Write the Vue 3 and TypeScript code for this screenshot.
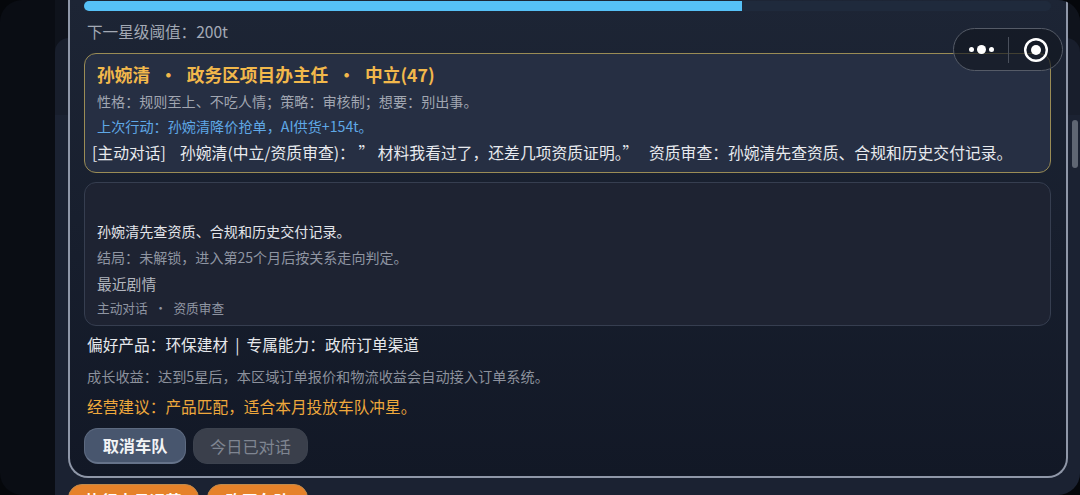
<template>
  <div class="page">
    <main class="shell">
      <div class="backdrop"></div>
      <section class="card">
        <div class="track"><div class="fill" :style="{ width: progress + '%' }"></div></div>
        <p class="threshold">下一星级阈值：200t</p>

        <div class="contact">
          <h3>孙婉清<span class="sep">·</span>政务区项目办主任<span class="sep">·</span>中立(47)</h3>
          <p class="traits">性格：规则至上、不吃人情；策略：审核制；想要：别出事。</p>
          <p class="last">上次行动：孙婉清降价抢单，AI供货+154t。</p>
          <p class="dialog">[主动对话]&nbsp;&nbsp;&nbsp;&nbsp;孙婉清(中立/资质审查)：&nbsp;”&nbsp;材料我看过了，还差几项资质证明。” &nbsp;&nbsp;资质审查：孙婉清先查资质、合规和历史交付记录。</p>
        </div>

        <div class="story">
          <p class="summary">孙婉清先查资质、合规和历史交付记录。</p>
          <p class="ending">结局：未解锁，进入第25个月后按关系走向判定。</p>
          <p class="recent">最近剧情</p>
          <p class="tags">主动对话<span class="sep">·</span>资质审查</p>
        </div>

        <p class="prefs">偏好产品：环保建材 &nbsp;|&nbsp; 专属能力：政府订单渠道</p>
        <p class="growth">成长收益：达到5星后，本区域订单报价和物流收益会自动接入订单系统。</p>
        <p class="advice">经营建议：产品匹配，适合本月投放车队冲星。</p>

        <div class="actions">
          <button class="btn cancel" type="button">取消车队</button>
          <button class="btn done" type="button" disabled>今日已对话</button>
        </div>
      </section>

      <div class="bottom-actions">
        <button class="orange first" type="button">执行本月运营</button>
        <button class="orange" type="button">购买车队</button>
      </div>
    </main>

    <div class="capsule">
      <span class="dots"><i></i><i class="big"></i><i></i></span>
      <span class="divider"></span>
      <svg class="target" width="26" height="26" viewBox="0 0 26 26">
        <circle cx="13" cy="13" r="10.8" fill="none" stroke="#fff" stroke-width="2.4" />
        <circle cx="13" cy="13" r="5" fill="#fff" />
      </svg>
    </div>
    <div class="scrollbar"></div>
  </div>
</template>

<script setup lang="ts">
const progress = 68
</script>

<style>
html,
body {
  margin: 0;
  background: #05070b;
}
</style>

<style scoped>
.page {
  position: relative;
  width: 1080px;
  height: 495px;
  overflow: hidden;
  border-radius: 22px;
  background: #0a0d14;
  font-family: "Noto Sans CJK SC", "Liberation Sans", sans-serif;
}

.shell {
  position: relative;
  height: 495px;
  margin-left: 55px;
  padding-left: 13px;
  box-sizing: border-box;
  background: linear-gradient(#0f131c 0 115px, #1b2232 115px);
}

.backdrop {
  position: absolute;
  left: 0;
  right: 0;
  top: 38px;
  height: 77px;
  border-radius: 14px 14px 0 0;
  background: #181e2c;
}

.card {
  position: relative;
  width: 1000px;
  height: 478px;
  box-sizing: border-box;
  padding: 1px 15px 0 14px;
  border: 2px solid #8f97a8;
  border-top: 0;
  border-radius: 0 0 20px 20px;
  background: linear-gradient(#1d2535, #121826);
}

p,
h3 {
  margin: 0;
}

.track {
  height: 10px;
  border-radius: 0 5px 5px 0;
  background: #1f2a3c;
}

.fill {
  height: 100%;
  border-radius: 5px 0 0 5px;
  background: #56c1f7;
}

.threshold {
  margin: 10px 0 0 3px;
  font-size: 15.6px;
  line-height: 20px;
  color: #a3a9b4;
}

.contact {
  margin-top: 12px;
  height: 120px;
  box-sizing: border-box;
  padding: 8px 12px 0;
  border: 1px solid #9a8c55;
  border-radius: 12px;
  background: #262f43;
}

.contact h3 {
  font-size: 17.7px;
  line-height: 24px;
  font-weight: 700;
  color: #f2b84b;
}

.contact h3 .sep {
  margin: 0 9.5px;
}

.traits {
  margin-top: 5px;
  font-size: 14.1px;
  line-height: 20px;
  color: #a1a6b1;
}

.last {
  margin-top: 5px;
  font-size: 14.15px;
  line-height: 20px;
  color: #5fa8e6;
}

.dialog {
  margin: 6px 0 0 -5px;
  font-size: 15.8px;
  line-height: 22px;
  color: #e8eaee;
  white-space: nowrap;
}

.story {
  margin-top: 9px;
  height: 144px;
  box-sizing: border-box;
  padding: 38px 12px 0;
  border: 1px solid #363e50;
  border-radius: 12px;
  background: #1e2332;
}

.summary {
  font-size: 14.1px;
  line-height: 20px;
  color: #e3e5ea;
}

.ending {
  margin-top: 6px;
  font-size: 14.05px;
  line-height: 20px;
  color: #8f95a2;
}

.recent {
  margin-top: 7px;
  font-size: 14.8px;
  line-height: 20px;
  color: #b2b6bf;
}

.tags {
  margin-top: 5px;
  font-size: 12.7px;
  line-height: 18px;
  color: #8f95a2;
}

.tags .sep {
  margin: 0 6.5px;
}

.prefs {
  margin: 8px 0 0 3px;
  font-size: 15.7px;
  line-height: 22px;
  color: #e6e8ec;
}

.growth {
  margin: 10px 0 0 3px;
  font-size: 14.2px;
  line-height: 20px;
  color: #8c919c;
}

.advice {
  margin: 10px 0 0 3px;
  font-size: 15.7px;
  line-height: 22px;
  color: #eea83c;
}

.actions {
  display: flex;
  gap: 7px;
  margin-top: 10px;
}

.btn {
  height: 36px;
  padding: 0;
  border-radius: 14px;
  font-family: inherit;
  font-size: 16.2px;
  line-height: 1;
}

.cancel {
  width: 102px;
  border: 1px solid #5d6a80;
  border-bottom: 2px solid #66738a;
  background: #48566e;
  color: #f2f3f5;
  font-weight: 700;
}

.done {
  width: 115px;
  border: 1px solid #3c424e;
  background: #3a3f4b;
  color: #7f8591;
}

.bottom-actions {
  display: flex;
  gap: 8px;
  margin-top: 6px;
}

.orange {
  width: 101px;
  height: 32px;
  border: 1px solid #c08a4c;
  border-radius: 14px;
  background: #e6822a;
  color: #fff;
  font-family: inherit;
  font-size: 16px;
  font-weight: 700;
  padding: 0;
}

.orange.first {
  width: 131px;
}

.capsule {
  position: absolute;
  left: 953px;
  top: 28px;
  display: flex;
  align-items: center;
  width: 110px;
  height: 43px;
  box-sizing: border-box;
  border: 1px solid #555b67;
  border-radius: 22px;
  background: rgba(18, 23, 33, 0.65);
}

.dots {
  display: flex;
  align-items: center;
  justify-content: center;
  gap: 3px;
  width: 54px;
}

.dots i {
  width: 5px;
  height: 5px;
  border-radius: 50%;
  background: #fff;
}

.dots i.big {
  width: 9px;
  height: 9px;
}

.divider {
  width: 1px;
  height: 26px;
  background: #4a505c;
}

.target {
  margin-left: 14px;
}

.scrollbar {
  position: absolute;
  left: 1072px;
  top: 120px;
  width: 6px;
  height: 48px;
  border-radius: 3px;
  background: #5f6673;
}
</style>
